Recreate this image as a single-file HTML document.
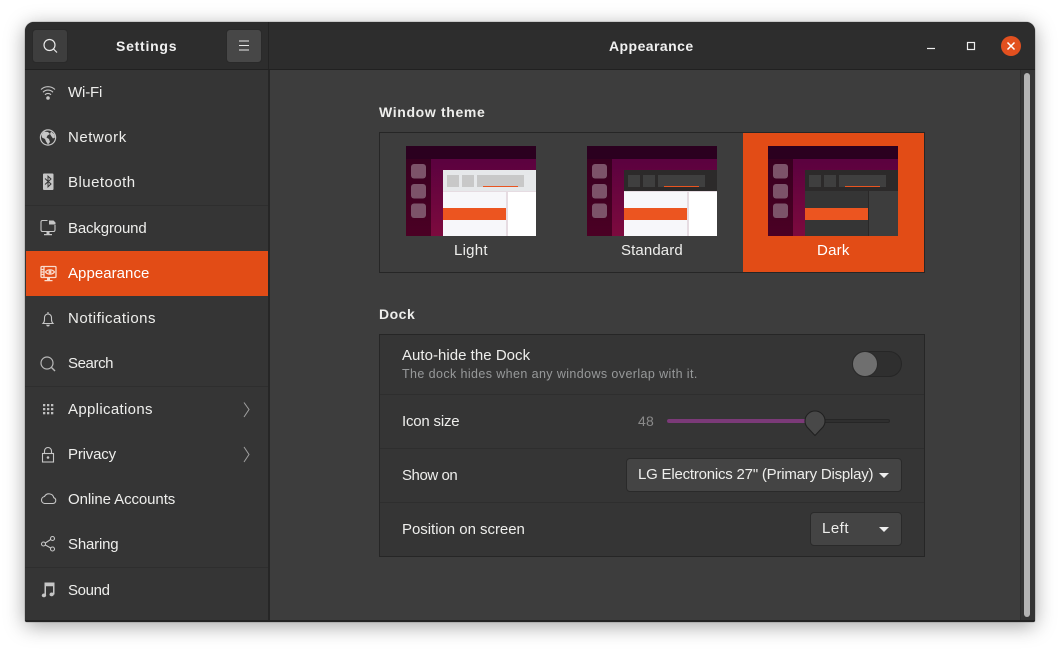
<!DOCTYPE html>
<html><head><meta charset="utf-8">
<style>
html,body{margin:0;padding:0;background:#fff;width:1060px;height:650px;overflow:hidden}
body{position:relative;font-family:"Liberation Sans",sans-serif;color:#eeeeec;font-size:15px}
.a{position:absolute}
.t{position:absolute;white-space:nowrap;line-height:20px;letter-spacing:.25px}
.l{left:68px;color:#eeeeec}
.sep{position:absolute;height:1px;background:#2e2e2e}
svg{position:absolute;overflow:visible}
.i{fill:none;stroke:#c6c6c6;stroke-width:1.1}
.f{fill:#c6c6c6;stroke:none}
.btn{position:absolute;background:#444;border:1px solid #2a2a2a;border-radius:4px;box-sizing:border-box}
</style></head><body>
<svg width="0" height="0" style="position:absolute">
<defs>
<linearGradient id="g1" x1="0" y1="0" x2="0" y2="1"><stop offset="0" stop-color="#55003f"/><stop offset="1" stop-color="#7d0a3e"/></linearGradient>
<linearGradient id="g2" x1="0" y1="0" x2="0" y2="1"><stop offset="0" stop-color="#35001f"/><stop offset="1" stop-color="#4b0024"/></linearGradient>
<g id="base">
<rect width="130" height="90" fill="url(#g1)"/>
<rect width="25" height="90" fill="url(#g2)"/>
<rect width="130" height="13" fill="#2b001f"/>
<rect x="5" y="18" width="15" height="14.500" rx="3" fill="#7c5369"/>
<rect x="5" y="38" width="15" height="14.500" rx="3" fill="#7c5369"/>
<rect x="5" y="57.500" width="15" height="14.500" rx="3" fill="#7c5369"/>
</g>
<g id="lighthead">
<rect x="37" y="24" width="93" height="21" fill="#e6e8ea"/>
<rect x="41" y="29" width="12" height="12" fill="#c8c8c8"/><rect x="56" y="29" width="12" height="12" fill="#c8c8c8"/><rect x="71" y="29" width="47" height="12" fill="#c8c8c8"/>
<rect x="77" y="40" width="35" height="1" fill="#e95420"/>
</g>
<g id="darkhead">
<rect x="37" y="24" width="93" height="21" fill="#2c2a2a"/>
<rect x="41" y="29" width="12" height="12" fill="#3f3f3f"/><rect x="56" y="29" width="12" height="12" fill="#3f3f3f"/><rect x="71" y="29" width="47" height="12" fill="#3f3f3f"/>
<rect x="77" y="40" width="35" height="1" fill="#e95420"/>
</g>
<g id="lightbody">
<rect x="37" y="45" width="93" height="45" fill="#f7f7fa"/>
<rect x="37" y="45" width="93" height="1" fill="#e6dce2"/>
<rect x="100" y="46" width="2" height="44" fill="#e6dce2"/>
<rect x="102" y="46" width="28" height="44" fill="#fff"/>
<rect x="37" y="62" width="63" height="12" fill="#ec5520"/>
</g>
</defs>
</svg>

<!-- window -->
<div class="a" style="left:25px;top:22px;width:1010px;height:600px;background:#3d3d3d;border-radius:9px 9px 2px 2px;box-shadow:0 4px 20px rgba(0,0,0,.36),0 0 1px rgba(0,0,0,.7);overflow:hidden">
  <div class="a" style="left:0;top:0;width:1010px;height:47px;background:#2d2d2d;border-bottom:1px solid #212121"></div>
  <div class="a" style="left:243px;top:0;width:1px;height:47px;background:#232323"></div>
  <div class="a" style="left:0;top:48px;width:243px;height:552px;background:#353535"></div>
  <div class="a" style="left:243px;top:48px;width:2px;height:552px;background:#262626"></div>
  <div class="a" style="left:995px;top:48px;width:1px;height:550px;background:#2e2e2e"></div>
  <div class="a" style="left:996px;top:48px;width:14px;height:552px;background:#353535"></div>
  <div class="a" style="left:999px;top:51px;width:6px;height:544px;background:#b4b4b4;border-radius:3px"></div>
  <div class="a" style="left:0;top:598px;width:1010px;height:2px;background:#242424"></div>
</div>

<!-- header buttons -->
<div class="btn" style="left:32px;top:29px;width:36px;height:34px;background:#3e3e3e"></div>
<div class="btn" style="left:226px;top:29px;width:36px;height:34px;background:#474747"></div>
<svg style="left:0;top:0" width="1060" height="650">
  <g fill="none" stroke="#e8e8e8" stroke-width="1.200">
    <circle cx="49.500" cy="45" r="5.500"/><path d="M53.500 49l3.500 3.500"/>
    <path d="M239 41h10M239 45.500h10M239 50h10" stroke-width="1"/>
  </g>
  <path d="M927 48.500h8" stroke="#eee" stroke-width="1.200"/>
  <rect x="967.500" y="42.500" width="7" height="7" fill="none" stroke="#eee" stroke-width="1.200"/>
  <circle cx="1011" cy="46" r="10" fill="#e2501f"/>
  <path d="M1007.500 42.500l7 7M1014.500 42.500l-7 7" stroke="#fff" stroke-width="1.500"/>
</svg>
<div class="t" style="left:116px;top:36px;font-weight:bold;font-size:14px;letter-spacing:.75px;color:#f0f0f0">Settings</div>
<div class="t" style="left:609px;top:36px;font-weight:bold;font-size:14px;letter-spacing:.45px;color:#f0f0f0">Appearance</div>

<!-- sidebar -->
<div class="sep" style="left:25px;top:205px;width:243px"></div>
<div class="sep" style="left:25px;top:386px;width:243px"></div>
<div class="sep" style="left:25px;top:567px;width:243px"></div>
<div class="a" style="left:26px;top:251px;width:242px;height:45px;background:#e24c16"></div>

<div class="t l" style="top:83px;letter-spacing:-.15px">Wi-Fi</div>
<div class="t l" style="top:128px;letter-spacing:.53px">Network</div>
<div class="t l" style="top:173px;letter-spacing:.47px">Bluetooth</div>
<div class="t l" style="top:219px;letter-spacing:-.15px">Background</div>
<div class="t l" style="top:264px;color:#fff;letter-spacing:.05px">Appearance</div>
<div class="t l" style="top:309px;letter-spacing:.48px">Notifications</div>
<div class="t l" style="top:354px;letter-spacing:-.4px">Search</div>
<div class="t l" style="top:400px;letter-spacing:.33px">Applications</div>
<div class="t l" style="top:445px;letter-spacing:-.18px">Privacy</div>
<div class="t l" style="top:490px;letter-spacing:-.08px">Online Accounts</div>
<div class="t l" style="top:535px;letter-spacing:-.18px">Sharing</div>
<div class="t l" style="top:581px;letter-spacing:-.35px">Sound</div>

<svg style="left:0;top:0" width="1060" height="650">
  <!-- wifi -->
  <g class="i"><path d="M41 89.500a10 10 0 0 1 14 0M43 92.200a7 7 0 0 1 10 0M45 94.800a4 4 0 0 1 6 0"/></g>
  <circle class="f" cx="48" cy="98" r="1.800"/>
  <!-- globe -->
  <circle cx="48" cy="137.500" r="7.600" fill="none" stroke="#c6c6c6" stroke-width="1.200"/>
  <path class="f" d="M44 131.500l4 .5 2 2-2.500 1.500-1 2 2.500 1.500 1 3-2 2.500-2-3-1-2.500-3-1.500-.5-3zM51 131.500l3.500 3 .5 3-2 1-1.500-2-1.500-2.500z"/>
  <!-- bluetooth -->
  <rect class="f" x="43" y="173.500" width="10.500" height="16.500" rx="1"/>
  <path d="M45 178.500l6 5.500-3 2.800v-10.600l3 2.800-6 5.500" fill="none" stroke="#353535" stroke-width="1"/>
  <!-- background -->
  <path class="i" d="M47.500 220.500h-5a1.500 1.500 0 0 0-1.500 1.500v8a1.500 1.500 0 0 0 1.500 1.500h11a1.500 1.500 0 0 0 1.500-1.500v-5"/>
  <path class="f" d="M49 220.500h4.500l2 2v2h-6.500zM46.500 232h3v2h2.500v1.300h-8v-1.300h2.500z"/>
  <!-- appearance -->
  <g fill="none" stroke="#f9dccf" stroke-width="1.300">
    <rect x="41" y="266.500" width="15" height="11" rx="1"/>
    <path d="M44 267v10M41 269.500h3M41 272h3M41 274.500h3"/>
    <path d="M45.500 272c2-2.800 7-2.800 9 0-2 2.800-7 2.800-9 0z"/>
  </g>
  <circle cx="50" cy="272" r="1.500" fill="#f9dccf"/>
  <path d="M47 278h3v2h2.500v1.300h-8v-1.300h2.500z" fill="#f9dccf"/>
  <!-- bell -->
  <path class="i" d="M43 323.500c1-1 1.500-2 1.500-4v-2a3.500 3.500 0 0 1 7 0v2c0 2 .5 3 1.500 4z"/>
  <path class="f" d="M47.400 312h1.200v1.500h-1.200zM46 324.800h4l-1 1.600h-2z"/>
  <!-- search -->
  <circle cx="47" cy="363" r="6" fill="none" stroke="#b8b8b8" stroke-width="1.200"/>
  <path d="M51.500 367.500l3.500 3.500" stroke="#b8b8b8" stroke-width="1.400"/>
  <!-- grid -->
  <g fill="#c0c0c0">
    <rect x="43" y="404" width="2.300" height="2.300"/><rect x="47" y="404" width="2.300" height="2.300"/><rect x="51" y="404" width="2.300" height="2.300"/>
    <rect x="43" y="408" width="2.300" height="2.300"/><rect x="47" y="408" width="2.300" height="2.300"/><rect x="51" y="408" width="2.300" height="2.300"/>
    <rect x="43" y="412" width="2.300" height="2.300"/><rect x="47" y="412" width="2.300" height="2.300"/><rect x="51" y="412" width="2.300" height="2.300"/>
  </g>
  <!-- chevrons -->
  <path d="M244 402.500l5 7-5 7.500" fill="none" stroke="#a0a0a0" stroke-width="1"/>
  <path d="M244 447l5 7.500-5 7.500" fill="none" stroke="#a0a0a0" stroke-width="1"/>
  <!-- lock -->
  <rect x="42.500" y="453.500" width="11" height="8.500" fill="none" stroke="#c6c6c6" stroke-width="1.100"/>
  <path class="i" d="M44.500 453.500v-2.500a3.500 3.500 0 0 1 7 0v2.500"/>
  <circle class="f" cx="48" cy="457.500" r="1.300"/>
  <!-- cloud -->
  <path class="i" d="M44.500 503.500h8.500a3 3 0 0 0 .8-5.800 5 5 0 0 0-9.300-1.200 3.600 3.600 0 0 0-3 3.500 3.500 3.500 0 0 0 3 3.500z"/>
  <!-- share -->
  <g class="i"><circle cx="52.500" cy="538.500" r="2"/><circle cx="43.500" cy="544" r="2"/><circle cx="52.500" cy="549" r="2"/><path d="M50.700 539.500l-5.400 3.500M45.300 545l5.400 3"/></g>
  <!-- music -->
  <path class="f" d="M44.500 582.500h10v12h-1.500v-8.200h-7v9.200h-1.500zM43.800 593.500a2.200 1.900 0 1 1-1 3.500 2.200 1.900 0 0 1 1-3.500zM51.500 592.500a2.200 1.900 0 1 1-1 3.500 2.200 1.900 0 0 1 1-3.500z"/>
</svg>

<!-- content -->
<div class="t" style="left:379px;top:102px;font-weight:bold;font-size:14px;letter-spacing:.65px">Window theme</div>
<div class="a" style="left:379px;top:132px;width:546px;height:141px;box-sizing:border-box;border:1px solid #262626;background:#3d3d3d"></div>
<div class="a" style="left:743px;top:133px;width:181px;height:139px;background:#e24c16"></div>
<svg style="left:406px;top:146px" width="130" height="90"><use href="#base"/><use href="#lighthead"/><use href="#lightbody"/></svg>
<svg style="left:587px;top:146px" width="130" height="90"><use href="#base"/><use href="#darkhead"/><use href="#lightbody"/></svg>
<svg style="left:768px;top:146px" width="130" height="90"><use href="#base"/><use href="#darkhead"/>
  <rect x="37" y="45" width="93" height="45" fill="#353535"/>
  <rect x="100" y="45" width="1" height="45" fill="#2a2828"/>
  <rect x="101" y="45" width="29" height="45" fill="#3d3d3d"/>
  <rect x="37" y="62" width="63" height="12" fill="#ec5520"/>
</svg>
<div class="t" style="left:454px;top:241px">Light</div>
<div class="t" style="left:621px;top:241px;letter-spacing:.12px">Standard</div>
<div class="t" style="left:817px;top:241px;color:#fff">Dark</div>

<div class="t" style="left:379px;top:304px;font-weight:bold;font-size:14px;letter-spacing:.5px">Dock</div>
<div class="a" style="left:379px;top:334px;width:546px;height:223px;box-sizing:border-box;border:1px solid #262626;background:#353535"></div>
<div class="sep" style="left:380px;top:394px;width:544px"></div>
<div class="sep" style="left:380px;top:448px;width:544px"></div>
<div class="sep" style="left:380px;top:502px;width:544px"></div>

<div class="t" style="left:402px;top:346px;letter-spacing:.03px">Auto-hide the Dock</div>
<div class="t" style="left:402px;top:364px;font-size:12.500px;color:#97999a;letter-spacing:.4px">The dock hides when any windows overlap with it.</div>
<div class="t" style="left:402px;top:412px;letter-spacing:-.2px">Icon size</div>
<div class="t" style="left:402px;top:466px;letter-spacing:-.45px">Show on</div>
<div class="t" style="left:402px;top:520px;letter-spacing:-.03px">Position on screen</div>

<!-- toggle -->
<div class="a" style="left:852px;top:351px;width:50px;height:26px;box-sizing:border-box;border:1px solid #262626;border-radius:13px;background:#2f2f2f"></div>
<div class="a" style="left:852px;top:351px;width:26px;height:26px;border-radius:50%;background:#6f6f6f;box-sizing:border-box;border:1px solid #2a2a2a"></div>

<!-- slider -->
<div class="t" style="left:638px;top:411px;font-size:14px;color:#8a8a8a">48</div>
<div class="a" style="left:667px;top:419px;width:223px;height:4px;box-sizing:border-box;border:1px solid #262626;border-radius:2px;background:#2f2f2f"></div>
<div class="a" style="left:667px;top:419px;width:148px;height:4px;border-radius:2px;background:#7b3a78"></div>
<svg style="left:0;top:0" width="1060" height="650">
  <path d="M815 435.500l-8-8.500a10 10 0 1 1 16 0z" fill="#484848" stroke="#202020" stroke-width="1.100"/>
</svg>

<!-- combos -->
<div class="btn" style="left:626px;top:458px;width:276px;height:34px"></div>
<div class="t" style="left:638px;top:465px;letter-spacing:-.21px">LG Electronics 27" (Primary Display)</div>
<div class="btn" style="left:810px;top:512px;width:92px;height:34px"></div>
<div class="t" style="left:822px;top:519px;letter-spacing:.5px">Left</div>
<svg style="left:0;top:0" width="1060" height="650">
  <path d="M879 473h10l-5 5z" fill="#eee"/>
  <path d="M879 527h10l-5 5z" fill="#eee"/>
</svg>
</body></html>
